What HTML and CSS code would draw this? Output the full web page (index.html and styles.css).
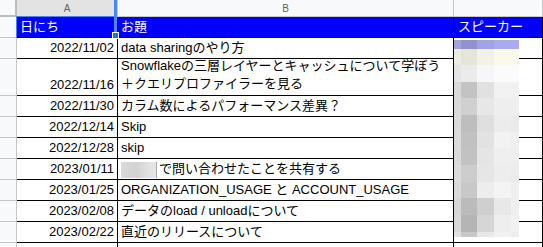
FILE: index.html
```html
<!DOCTYPE html>
<html lang="ja">
<head>
<meta charset="utf-8">
<title>Sheet</title>
<link rel="stylesheet" href="styles.css">
</head>
<body>
<div class="sheet">
  <div class="row colhead">
    <div class="corner"></div>
    <div class="ch ch-a">A</div>
    <div class="ch ch-b">B</div>
    <div class="ch ch-c"></div>
  </div>
  <div class="row hdr">
    <div class="rh"></div>
    <div class="c b-l">日にち</div>
    <div class="c b-m">お題</div>
    <div class="c b-r">スピーカー</div>
  </div>
  <div class="row">
    <div class="rh"></div>
    <div class="c b-l num">2022/11/02</div>
    <div class="c b-m">data sharingのやり方</div>
    <div class="c b-r"></div>
  </div>
  <div class="row tall">
    <div class="rh"></div>
    <div class="c b-l num">2022/11/16</div>
    <div class="c b-m"><span class="wrap">Snowflakeの三層レイヤーとキャッシュについて学ぼう<br>＋クエリプロファイラーを見る</span></div>
    <div class="c b-r"></div>
  </div>
  <div class="row">
    <div class="rh"></div>
    <div class="c b-l num">2022/11/30</div>
    <div class="c b-m">カラム数によるパフォーマンス差異？</div>
    <div class="c b-r"></div>
  </div>
  <div class="row">
    <div class="rh"></div>
    <div class="c b-l num">2022/12/14</div>
    <div class="c b-m">Skip</div>
    <div class="c b-r"></div>
  </div>
  <div class="row">
    <div class="rh"></div>
    <div class="c b-l num">2022/12/28</div>
    <div class="c b-m">skip</div>
    <div class="c b-r"></div>
  </div>
  <div class="row">
    <div class="rh"></div>
    <div class="c b-l num">2023/01/11</div>
    <div class="c b-m"><span class="blur"></span>で問い合わせたことを共有する</div>
    <div class="c b-r"></div>
  </div>
  <div class="row">
    <div class="rh"></div>
    <div class="c b-l num">2023/01/25</div>
    <div class="c b-m">ORGANIZATION_USAGE と ACCOUNT_USAGE</div>
    <div class="c b-r"></div>
  </div>
  <div class="row">
    <div class="rh"></div>
    <div class="c b-l num">2023/02/08</div>
    <div class="c b-m">データのload / unloadについて</div>
    <div class="c b-r"></div>
  </div>
  <div class="row">
    <div class="rh"></div>
    <div class="c b-l num">2023/02/22</div>
    <div class="c b-m">直近のリリースについて</div>
    <div class="c b-r"></div>
  </div>
  <div class="row">
    <div class="rh"></div>
    <div class="c b-l num"></div>
    <div class="c b-m"></div>
    <div class="c b-r"></div>
  </div>

  <div class="sel"></div>
  <div class="selbar"></div>
  <div class="handle"></div>

  <div class="mosaic">
    <i style="background:#a3a3dd"></i><i style="background:#9292d0"></i><i style="background:#a2a2e6"></i><i style="background:#aaaaee"></i><i style="background:#aaaaee"></i>
    <i style="background:#ecece0"></i><i style="background:#e5e5d8"></i><i style="background:#f2f2e6"></i><i style="background:#fafaea"></i><i style="background:#fafaea"></i>
    <i style="background:#e4e4e4"></i><i style="background:#ebebeb"></i><i style="background:#f7f7f9"></i><i style="background:#fbfbfb"></i><i style="background:#fbfbfb"></i>
    <i style="background:#dadada"></i><i style="background:#c3c3c3"></i><i style="background:#e1e1e1"></i><i style="background:#f2f2f2"></i><i style="background:#f1f1f1"></i>
    <i style="background:#dadada"></i><i style="background:#d0d0d0"></i><i style="background:#e7e7e7"></i><i style="background:#eeeeee"></i><i style="background:#efefef"></i>
    <i style="background:#dbdbdb"></i><i style="background:#bebebe"></i><i style="background:#dfdfdf"></i><i style="background:#ececec"></i><i style="background:#eaeaea"></i>
    <i style="background:#dbdbdb"></i><i style="background:#c1c1c1"></i><i style="background:#e2e2e2"></i><i style="background:#f2f2f2"></i><i style="background:#efefef"></i>
    <i style="background:#dadada"></i><i style="background:#c2c2c2"></i><i style="background:#e5e5e5"></i><i style="background:#efefef"></i><i style="background:#eeeeee"></i>
    <i style="background:#dcdcdc"></i><i style="background:#cdcdcd"></i><i style="background:#e6e6e6"></i><i style="background:#ededed"></i><i style="background:#ebebeb"></i>
    <i style="background:#dadada"></i><i style="background:#c8c8c8"></i><i style="background:#ededed"></i><i style="background:#f4f4f4"></i><i style="background:#efefef"></i>
    <i style="background:#d6d6d6"></i><i style="background:#bbbbbb"></i><i style="background:#cfcfcf"></i><i style="background:#e8e8e8"></i><i style="background:#efefef"></i>
    <i style="background:#d8d8d8"></i><i style="background:#b5b5b5"></i><i style="background:#d6d6d6"></i><i style="background:#eeeeee"></i><i style="background:#f1f1f1"></i>
    <i style="background:#e2e2e2"></i><i style="background:#c8c8c8"></i><i style="background:#e8e8e8"></i><i style="background:#f1f1f1"></i><i style="background:#ededed"></i>
  </div>
</div>
</body>
</html>
```

FILE: styles.css
```css
html, body {
  margin: 0;
  padding: 0;
  background: #ffffff;
  overflow: hidden;
}

.sheet {
  position: relative;
  width: 543px;
  height: 247px;
  overflow: hidden;
  font-family: "Liberation Sans", "Noto Sans CJK JP", Arial, sans-serif;
  font-size: 13px;
  color: #000000;
}

.row {
  display: flex;
  height: 21px;
}

.row.tall {
  height: 37px;
}

.row.colhead {
  height: 17px;
}

.corner {
  flex: none;
  width: 17px;
  box-sizing: border-box;
  background: #f8f9fa;
  border-right: 2px solid #bdbdbd;
  border-bottom: 2px solid #bdbdbd;
}

.ch {
  box-sizing: border-box;
  background: #f8f9fa;
  border-right: 1px solid #c7c7c7;
  border-bottom: 1px solid #c7c7c7;
  color: #5f6368;
  font-size: 10px;
  display: flex;
  align-items: center;
  justify-content: center;
  padding-top: 1px;
}

.ch-a {
  flex: none;
  width: 101px;
  background: #e3e3e3;
}

.ch-b {
  flex: none;
  width: 336px;
}

.ch-c {
  flex: 1;
}

.rh {
  flex: none;
  width: 17px;
  box-sizing: border-box;
  background: #f8f9fa;
  border-right: 1px solid #c7c7c7;
  border-bottom: 1px solid #c7c7c7;
}

.c {
  box-sizing: border-box;
  border-right: 1px solid #000000;
  border-bottom: 1px solid #000000;
  padding: 0 3px 2px 3px;
  display: flex;
  align-items: flex-end;
  line-height: 17px;
  white-space: nowrap;
  overflow: hidden;
}

.b-l {
  flex: none;
  width: 101px;
}

.b-m {
  flex: none;
  width: 336px;
}

.b-r {
  flex: 1;
  padding-left: 4px;
}

.num {
  justify-content: flex-end;
}

.hdr .c {
  background: #0000ff;
  color: #ffffff;
}

.wrap {
  display: block;
  line-height: 18px;
  white-space: normal;
}

.blur {
  display: inline-block;
  width: 36px;
  height: 16px;
  margin-bottom: -1px;
  margin-right: 2px;
  box-sizing: border-box;
  background: linear-gradient(to right, #dadada 0%, #d2d2d2 45%, #dedede 70%, #e6e6e6 100%);
  border-right: 1px solid #a8a8a8;
  align-self: flex-end;
}

.sel {
  position: absolute;
  left: 16px;
  top: 16px;
  width: 100px;
  height: 22px;
  box-sizing: border-box;
  border-top: 1px solid #4b84f0;
  border-left: 1px solid #4b84f0;
}

.selbar {
  position: absolute;
  left: 114px;
  top: 0;
  width: 3px;
  height: 36px;
  background: #4a89f3;
}

.handle {
  position: absolute;
  left: 112px;
  top: 32px;
  width: 5px;
  height: 5px;
  background: #1a73e8;
  border: 1px solid #ffffff;
}

.mosaic {
  position: absolute;
  left: 454px;
  top: 40px;
  display: grid;
  grid-template-columns: 7px 16px 17px 17px 8px;
  grid-template-rows: 9px 16px 17px 16px 17px 17px 16px 17px 17px 16px 17px 17px 5px;
}

.mosaic i {
  display: block;
}
```
